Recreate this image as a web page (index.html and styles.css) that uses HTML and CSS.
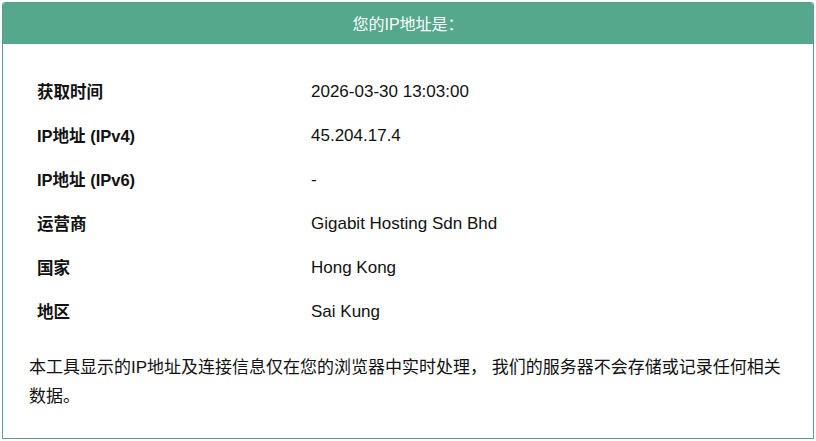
FILE: index.html
```html
<!DOCTYPE html>
<html lang="zh-CN">
<head>
<meta charset="utf-8">
<title>您的IP地址</title>
<link rel="stylesheet" href="styles.css">
</head>
<body>
<div class="card">
  <div class="card-header">您的IP地址是：</div>
  <div class="card-body">
    <div class="info">
      <div class="row"><div class="label">获取时间</div><div class="value">2026-03-30 13:03:00</div></div>
      <div class="row"><div class="label">IP地址 (IPv4)</div><div class="value">45.204.17.4</div></div>
      <div class="row"><div class="label">IP地址 (IPv6)</div><div class="value">-</div></div>
      <div class="row"><div class="label">运营商</div><div class="value">Gigabit Hosting Sdn Bhd</div></div>
      <div class="row"><div class="label">国家</div><div class="value">Hong Kong</div></div>
      <div class="row"><div class="label">地区</div><div class="value">Sai Kung</div></div>
    </div>
    <p class="note">本工具显示的IP地址及连接信息仅在您的浏览器中实时处理， 我们的服务器不会存储或记录任何相关数据。</p>
  </div>
</div>
</body>
</html>
```
FILE: styles.css
```css
* { box-sizing: border-box; }
html, body { margin: 0; padding: 0; background: #fff; }
body {
  font-family: "Liberation Sans", "Noto Sans CJK SC", sans-serif;
  color: #111;
  padding: 2px;
}
.card {
  border: 1px solid #5a9b90;
  border-radius: 3px 3px 0 0;
  height: 437px;
  overflow: hidden;
}
.card-header {
  background: #55a88c;
  color: #fff;
  height: 42px;
  margin: -1px -1px 0;
  display: flex;
  align-items: center;
  justify-content: center;
  font-size: 16px;
  border-radius: 3px 3px 0 0;
}
.card-body {
  padding: 26px 26px 0 26px;
}
.info {
  display: flex;
  flex-direction: column;
}
.row {
  display: grid;
  grid-template-columns: 282px 1fr;
  height: 44px;
  align-items: center;
  font-size: 17px;
  line-height: 22px;
}
.label {
  font-weight: bold;
  font-size: 16.5px;
  padding-left: 8px;
}
.value {
  padding-left: 0;
}
.note {
  margin: 19px 0 0;
  font-size: 17px;
  line-height: 29px;
}
```
